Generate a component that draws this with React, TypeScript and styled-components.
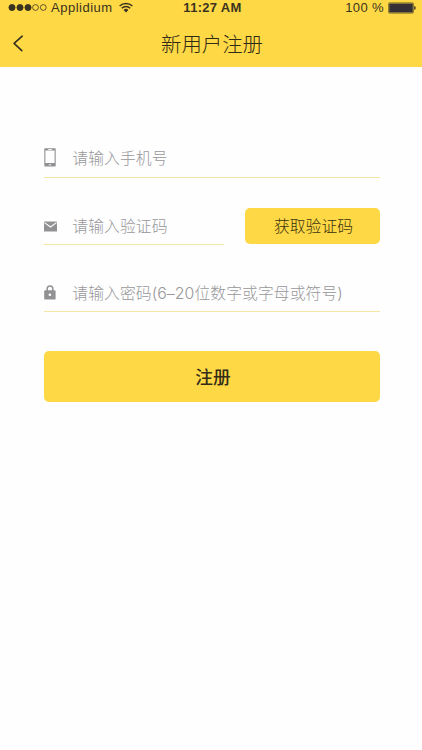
import React from "react";
import styled, { createGlobalStyle } from "styled-components";

const GlobalStyle = createGlobalStyle`
  * { box-sizing: border-box; }
  body { margin: 0; background: #fefefe; }
`;

const cjk = `"Noto Sans CJK SC", sans-serif`;

const Screen = styled.div`
  width: 422px;
  height: 750px;
  overflow: hidden;
  background: #fefefe;
  font-family: ${cjk};
`;

const Header = styled.header`
  height: 67px;
  background: #fed845;
  color: #3a3320;
`;

const StatusBar = styled.div`
  display: grid;
  grid-template-columns: 1fr auto 1fr;
  align-items: center;
  height: 15px;
  padding: 0 6px 0 8px;
  font: 13px/15px "Liberation Sans", Arial, sans-serif;
  white-space: nowrap;
`;

const Carrier = styled.div`
  display: flex;
  align-items: center;
  svg { display: block; }
`;

const CarrierName = styled.span`
  margin: 0 6.5px 0 4px;
  font-size: 13px;
  letter-spacing: 0.5px;
`;

const Clock = styled.span`
  padding-left: 1px;
  font-weight: 700;
  font-size: 13px;
  letter-spacing: 0.3px;
`;

const Battery = styled.div`
  display: flex;
  align-items: center;
  justify-content: flex-end;
  gap: 4px;
  letter-spacing: 0.4px;
  svg { display: block; }
`;

const NavBar = styled.nav`
  display: grid;
  grid-template-columns: 40px 1fr 40px;
  align-items: center;
  height: 52px;
  padding-top: 5px;
`;

const BackButton = styled.button`
  display: flex;
  width: 40px;
  height: 40px;
  padding: 0 0 0 12px;
  align-items: center;
  border: 0;
  background: none;
  color: #33301f;
`;

const Title = styled.h1`
  margin: 0;
  padding: 0 0 2px 2px;
  text-align: center;
  font-size: 20.4px;
  font-weight: 300;
  line-height: 30px;
  color: #2f2a16;
`;

const Form = styled.form`
  display: flex;
  flex-direction: column;
  padding: 71px 42px 0 44px;
`;

const Row = styled.div<{ $gap?: number }>`
  display: flex;
  align-items: flex-start;
  justify-content: space-between;
  margin-top: ${(p) => p.$gap ?? 0}px;
`;

const Field = styled.label<{ $width: number; $height: number }>`
  display: flex;
  align-items: center;
  width: ${(p) => p.$width}px;
  height: ${(p) => p.$height}px;
  border-bottom: 1px solid #f3e7a4;
  color: #919093;
`;

const IconSlot = styled.span`
  display: flex;
  flex: 0 0 28.3px;
`;

const Input = styled.input`
  flex: 1;
  min-width: 0;
  height: 30px;
  padding: 1px 0 0;
  border: 0;
  outline: 0;
  background: none;
  font-family: Inter, ${cjk};
  font-size: 15.8px;
  font-weight: 300;
  letter-spacing: 0.08px;
  color: #444;
  &::placeholder { color: #98979a; opacity: 1; }
`;

const Button = styled.button`
  border: 0;
  border-radius: 5px;
  background: #fed845;
  font-family: ${cjk};
`;

const CodeButton = styled(Button)`
  width: 135px;
  height: 36px;
  padding: 0 0 1px 2px;
  font-size: 15.8px;
  font-weight: 300;
  color: #3b3210;
`;

const SubmitButton = styled(Button)`
  width: 336px;
  height: 51px;
  margin-top: 39px;
  padding: 0 0 2px 2px;
  font-size: 17.7px;
  font-weight: 500;
  color: #332d18;
`;

const SignalDots = () => (
  <svg width="39" height="9" viewBox="0 0 39 9" stroke="currentColor" strokeWidth="0.8">
    {[4, 12, 20, 27.5, 35.3].map((cx, i) => (
      <circle key={cx} cx={cx} cy="4.5" r={i < 3 ? 3.1 : 2.9} fill={i < 3 ? "currentColor" : "none"} />
    ))}
  </svg>
);

const Wifi = () => (
  <svg width="14" height="11" viewBox="0 0 14 11" fill="none" stroke="currentColor" strokeWidth="1.5">
    <path d="M0.6 4A9.2 9.2 0 0 1 13.4 4M2.8 6.3A6 6 0 0 1 11.2 6.3" />
    <path d="M4.6 8A3.5 3.5 0 0 1 9.4 8L7 10.4Z" fill="currentColor" stroke="none" />
  </svg>
);

const BatteryFull = () => (
  <svg width="28" height="12" viewBox="0 0 28 12">
    <rect x="0.5" y="0.8" width="25" height="10.4" rx="1" fill="none" stroke="#746724" strokeWidth="0.8" />
    <rect x="1.2" y="1.5" width="23.6" height="9" fill="#343035" />
    <path d="M26.2 4.1Q27.8 4.2 27.8 6T26.2 7.9Z" fill="#443d2a" />
  </svg>
);

const Chevron = () => (
  <svg width="12" height="17" viewBox="0 0 12 17" fill="none" stroke="currentColor" strokeWidth="1.6" strokeLinecap="round" strokeLinejoin="round">
    <path d="M10.2 1.2L2.1 8.4L9.8 15.6" />
  </svg>
);

const Phone = () => (
  <svg width="12" height="19" viewBox="0 0 12 19">
    <path fill="currentColor" fillRule="evenodd" d="M1 0.3H11Q11.7 0.3 11.7 1V17.8Q11.7 18.5 11 18.5H1Q0.3 18.5 0.3 17.8V1Q0.3 0.3 1 0.3ZM1.4 2.6V15H10.6V2.6Z" />
    <path d="M4.2 1.5H7.8M4.8 16.8H7.2" stroke="#fefefe" strokeWidth="0.9" />
  </svg>
);

const Mail = () => (
  <svg width="13" height="11" viewBox="0 0 13 11">
    <rect x="0" y="0.5" width="13" height="10" rx="0.6" fill="currentColor" />
    <path d="M0.5 1.6L6.5 6L12.5 1.6" fill="none" stroke="#fefefe" strokeWidth="1.1" />
  </svg>
);

const Lock = () => (
  <svg width="12" height="15" viewBox="0 0 12 15">
    <path d="M3.2 6V3.8A2.8 2.8 0 0 1 8.8 3.8V6" fill="none" stroke="currentColor" strokeWidth="1.5" />
    <rect x="0.2" y="5.2" width="11.4" height="9.4" rx="1.2" fill="currentColor" />
    <circle cx="5.9" cy="9.8" r="1.3" fill="#fefefe" />
  </svg>
);

export default function App() {
  return (
    <Screen>
      <GlobalStyle />
      <Header>
        <StatusBar>
          <Carrier>
            <SignalDots />
            <CarrierName>Applidium</CarrierName>
            <Wifi />
          </Carrier>
          <Clock>11:27 AM</Clock>
          <Battery>
            <span>100 %</span>
            <BatteryFull />
          </Battery>
        </StatusBar>
        <NavBar>
          <BackButton type="button" aria-label="返回"><Chevron /></BackButton>
          <Title>新用户注册</Title>
        </NavBar>
      </Header>
      <Form>
        <Field $width={336} $height={40}>
          <IconSlot><Phone /></IconSlot>
          <Input placeholder="请输入手机号" />
        </Field>
        <Row $gap={30}>
          <Field $width={180} $height={37}>
            <IconSlot><Mail /></IconSlot>
            <Input placeholder="请输入验证码" />
          </Field>
          <CodeButton type="button">获取验证码</CodeButton>
        </Row>
        <Row $gap={29}>
          <Field $width={336} $height={38}>
            <IconSlot><Lock /></IconSlot>
            <Input placeholder="请输入密码(6–20位数字或字母或符号)" />
          </Field>
        </Row>
        <SubmitButton type="button">注册</SubmitButton>
      </Form>
    </Screen>
  );
}
